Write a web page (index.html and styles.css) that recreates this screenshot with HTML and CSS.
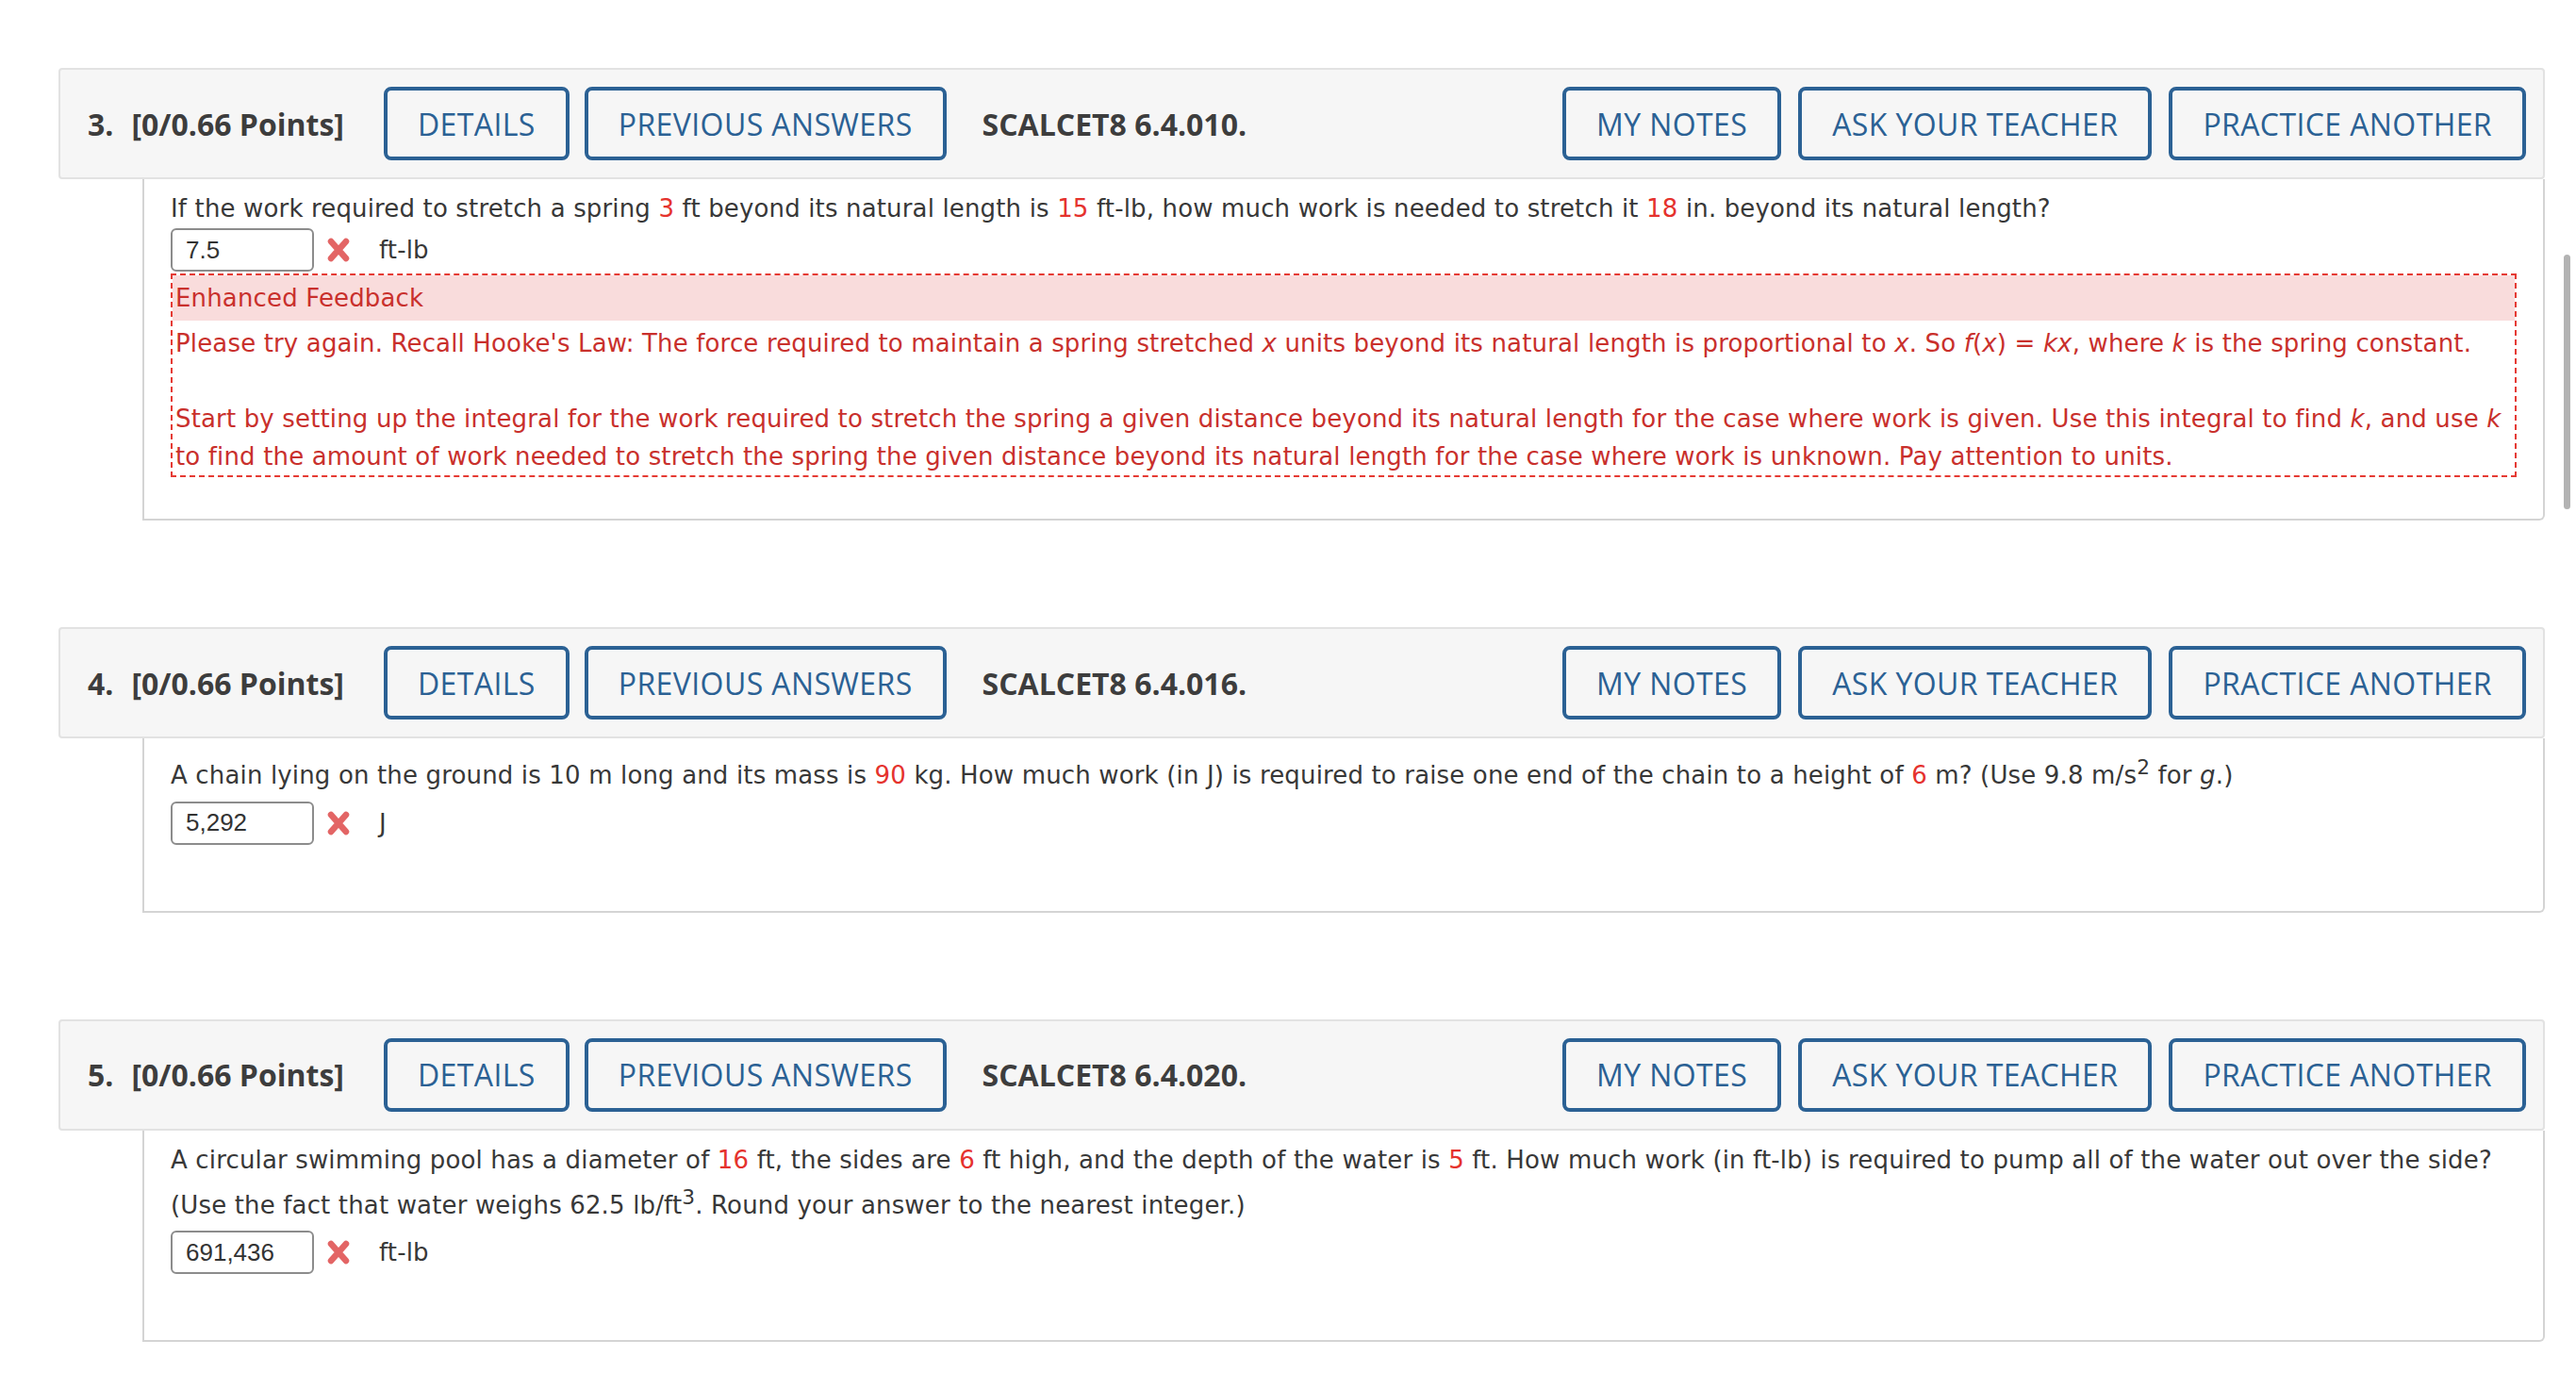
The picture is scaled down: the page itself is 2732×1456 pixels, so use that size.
FILE: index.html
```html
<!DOCTYPE html>
<html lang="en">
<head>
  <meta charset="UTF-8" />
  <title>Assignment</title>
  <link rel="stylesheet" href="styles.css">
</head>
<body>
  <div class="page">

    <div class="question">
      <div class="q-head">
        <span class="q-num">3.</span>
        <span class="q-points">[0/0.66 Points]</span>
        <button class="q-btn">DETAILS</button>
        <button class="q-btn">PREVIOUS ANSWERS</button>
        <span class="q-code">SCALCET8 6.4.010.</span>
        <div class="q-tools">
          <button class="q-btn">MY NOTES</button>
          <button class="q-btn">ASK YOUR TEACHER</button>
          <button class="q-btn">PRACTICE ANOTHER</button>
        </div>
      </div>
      <div class="q-body">
        <p class="q-text">If the work required to stretch a spring <span class="val">3</span> ft beyond its natural length is <span class="val">15</span> ft-lb, how much work is needed to stretch it <span class="val">18</span> in. beyond its natural length?</p>
        <div class="answer-row first">
          <input class="answer" type="text" value="7.5" readonly>
          <svg class="wrong" viewBox="0 0 28 28"><path d="M6 5 L22 23 M22 5 L6 23" /></svg>
          <span class="unit">ft-lb</span>
        </div>
        <div class="feedback">
          <div class="feedback-title">Enhanced Feedback</div>
          <div class="feedback-text">Please try again. Recall Hooke's Law: The force required to maintain a spring stretched <i>x</i> units beyond its natural length is proportional to <i>x</i>. So <i>f</i>(<i>x</i>) = <i>kx</i>, where <i>k</i> is the spring constant.<br><br>Start by setting up the integral for the work required to stretch the spring a given distance beyond its natural length for the case where work is given. Use this integral to find <i>k</i>, and use <i>k</i> to find the amount of work needed to stretch the spring the given distance beyond its natural length for the case where work is unknown. Pay attention to units.</div>
        </div>
      </div>
    </div>

    <div class="question">
      <div class="q-head">
        <span class="q-num">4.</span>
        <span class="q-points">[0/0.66 Points]</span>
        <button class="q-btn">DETAILS</button>
        <button class="q-btn">PREVIOUS ANSWERS</button>
        <span class="q-code">SCALCET8 6.4.016.</span>
        <div class="q-tools">
          <button class="q-btn">MY NOTES</button>
          <button class="q-btn">ASK YOUR TEACHER</button>
          <button class="q-btn">PRACTICE ANOTHER</button>
        </div>
      </div>
      <div class="q-body">
        <p class="q-text">A chain lying on the ground is 10 m long and its mass is <span class="val">90</span> kg. How much work (in J) is required to raise one end of the chain to a height of <span class="val">6</span> m? (Use 9.8 m/s<sup>2</sup> for <i>g</i>.)</p>
        <div class="answer-row">
          <input class="answer" type="text" value="5,292" readonly>
          <svg class="wrong" viewBox="0 0 28 28"><path d="M6 5 L22 23 M22 5 L6 23" /></svg>
          <span class="unit">J</span>
        </div>
      </div>
    </div>

    <div class="question">
      <div class="q-head">
        <span class="q-num">5.</span>
        <span class="q-points">[0/0.66 Points]</span>
        <button class="q-btn">DETAILS</button>
        <button class="q-btn">PREVIOUS ANSWERS</button>
        <span class="q-code">SCALCET8 6.4.020.</span>
        <div class="q-tools">
          <button class="q-btn">MY NOTES</button>
          <button class="q-btn">ASK YOUR TEACHER</button>
          <button class="q-btn">PRACTICE ANOTHER</button>
        </div>
      </div>
      <div class="q-body">
        <p class="q-text">A circular swimming pool has a diameter of <span class="val">16</span> ft, the sides are <span class="val">6</span> ft high, and the depth of the water is <span class="val">5</span> ft. How much work (in ft-lb) is required to pump all of the water out over the side?<br>(Use the fact that water weighs 62.5 lb/ft<sup>3</sup>. Round your answer to the nearest integer.)</p>
        <div class="answer-row">
          <input class="answer" type="text" value="691,436" readonly>
          <svg class="wrong" viewBox="0 0 28 28"><path d="M6 5 L22 23 M22 5 L6 23" /></svg>
          <span class="unit">ft-lb</span>
        </div>
      </div>
    </div>

  </div>
  <div class="scroll-thumb"></div>
</body>
</html>
```

FILE: styles.css
```css
body {
  margin: 0;
  background: #fff;
  color: #383838;
  font-family: "DejaVu Sans", Verdana, sans-serif;
}
.page {
  padding: 72px 33px 0 62px;
}
.question {
  margin-bottom: 113px;
}
.question:last-child {
  margin-bottom: 0;
}

/* header bar */
.q-head {
  display: flex;
  align-items: center;
  background-color: #f6f6f6;
  border: 2px solid #e2e2e2;
  border-radius: 4px;
  padding: 18px 18px 18px 29px;
  font-family: "Open Sans", sans-serif;
  font-size: 32px;
  color: #3d3d3d;
}
.q-num {
  font-weight: bold;
  margin-right: 19px;
}
.q-points {
  font-weight: bold;
  margin-right: 42px;
}
.q-code {
  font-weight: bold;
  margin-left: 38px;
}
.q-tools {
  margin-left: auto;
  display: flex;
  gap: 18px;
}
.q-btn {
  height: 78px;
  padding: 0 32px;
  background: transparent;
  border: 4px solid #2b6194;
  border-radius: 8px;
  color: #2b6194;
  font-family: "Open Sans", sans-serif;
  font-size: 32px;
  letter-spacing: 0.4px;
  cursor: pointer;
}
.q-btn + .q-btn {
  margin-left: 16px;
}
.q-tools .q-btn + .q-btn {
  margin-left: 0;
}

/* question body */
.q-body {
  margin-left: 89px;
  border: 2px solid #d4d4d4;
  border-top: none;
  border-radius: 0 0 6px 0;
  padding: 11px 28px 44px 28px;
  font-size: 26px;
  line-height: 40px;
  letter-spacing: 0.15px;
}
.q-text {
  margin: 0;
}
.val {
  color: #e5322d;
}
.answer-row {
  display: flex;
  align-items: center;
  margin-top: 8px;
  margin-bottom: 26px;
}
.answer-row.first {
  margin-top: 1px;
  margin-bottom: 2px;
}
.answer {
  box-sizing: border-box;
  width: 152px;
  height: 46px;
  border: 2px solid #8c8c8c;
  border-radius: 6px;
  padding: 0 14px;
  font-family: "Liberation Sans", Arial, sans-serif;
  font-size: 26px;
  color: #333;
  outline: none;
}
.wrong {
  width: 30px;
  height: 28px;
  margin: 0 28px 0 11px;
}
.wrong path {
  stroke: #e36565;
  stroke-width: 6.5;
  stroke-linecap: round;
  fill: none;
}
.unit {
  color: #383838;
}

/* feedback */
.feedback {
  border: 2px dashed #e53a33;
  color: #c9302c;
}
.feedback-title {
  background-color: #f9dcdc;
  padding: 4px 3px;
}
.feedback-text {
  padding: 4px 3px 0 3px;
}

.scroll-thumb {
  position: absolute;
  left: 2719px;
  top: 270px;
  width: 7px;
  height: 270px;
  border-radius: 4px;
  background-color: #b3b3b3;
}
```
